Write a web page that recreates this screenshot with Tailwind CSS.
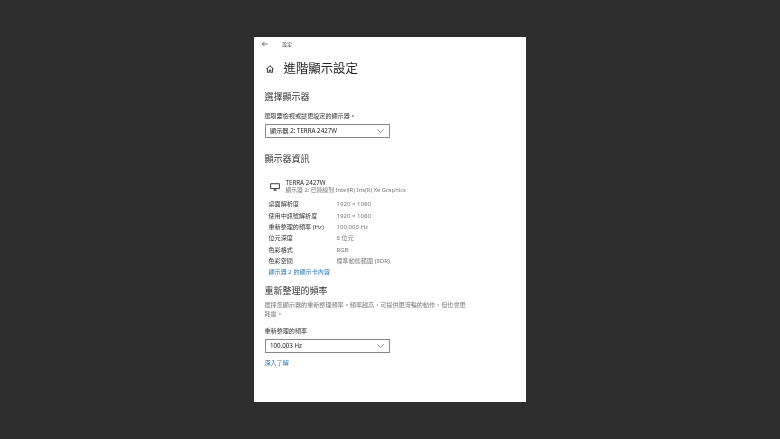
<!DOCTYPE html>
<html lang="zh-Hant">
<head>
    <meta charset="UTF-8">
    <title>進階顯示設定</title>
    <script src="https://cdn.jsdelivr.net/npm/@tailwindcss/browser@4"></script>
</head>
<body class="bg-[#2e2e2e] h-[439px] w-[780px] overflow-hidden font-['Noto_Sans','Noto_Sans_CJK_TC',sans-serif]">
    <div class="pt-[37px] pl-[254px]">
        <div class="bg-white w-[272px] h-[365px] overflow-hidden text-[#1a1a1a]">
            <!-- title bar -->
            <div class="flex items-center h-[14px] pl-[8px] blur-[0.3px]">
                <svg class="w-[6px] h-[6px]" viewBox="0 0 8 8" fill="none" stroke="#333" stroke-width="0.9"><path d="M0.5 4H7.5M3.5 1L0.5 4L3.5 7"/></svg>
                <span class="ml-[14px] text-[5px] leading-none text-[#444]">設定</span>
            </div>

            <div class="pl-[10.5px] blur-[0.3px]">
                <div class="flex items-center h-[20px] mt-[8px]">
                    <svg class="w-[8px] h-[8px] ml-[1px]" viewBox="0 0 10 10" fill="none" stroke="#222" stroke-width="1.1"><path d="M0.6 5L5 0.9L9.4 5M1.8 4V9.2H4.1V6.3H5.9V9.2H8.2V4"/></svg>
                    <h1 class="ml-[10px] text-[12.4px] leading-none text-[#222] font-normal">進階顯示設定</h1>
                </div>

                <h2 class="mt-[12px] text-[9px] leading-[12px] text-[#333] font-normal">選擇顯示器</h2>
                <p class="mt-[7.5px] text-[6.1px] leading-[9px] text-[#333]">選取要檢視或變更設定的顯示器。</p>
                <div class="mt-[4.5px] ml-[0.5px] w-[125px] h-[14px] border-[1.5px] border-[#8a8a8a] flex items-center justify-between pl-[4px] pr-[5px]">
                    <span class="text-[6.2px] leading-none text-[#222]">顯示器 2: TERRA 2427W</span>
                    <svg class="w-[7px] h-[4px]" viewBox="0 0 7 4" fill="none" stroke="#666" stroke-width="0.7"><path d="M0.5 0.5L3.5 3.5L6.5 0.5"/></svg>
                </div>

                <h2 class="mt-[14.5px] text-[9px] leading-[12px] text-[#333] font-normal">顯示器資訊</h2>

                <div class="flex items-center mt-[14.5px] pl-[5px]">
                    <svg class="w-[10px] h-[8px]" viewBox="0 0 12 10" fill="none" stroke="#222" stroke-width="1.1"><path d="M0.5 0.9H11.5V7H0.5ZM4 9H8M6 7V9"/></svg>
                    <div class="ml-[6px]">
                        <div class="text-[6.2px] leading-[7px] text-[#222]">TERRA 2427W</div>
                        <div class="text-[5.8px] leading-[8px] text-[#777]">顯示器 2: 已連線到 Intel(R) Iris(R) Xe Graphics</div>
                    </div>
                </div>

                <dl class="mt-[4.5px] pl-[4px] grid grid-cols-[68px_1fr] auto-rows-[11.4px] items-center text-[6.1px] leading-none">
                    <dt class="text-[#333]">桌面解析度</dt><dd class="text-[#777]">1920 × 1080</dd>
                    <dt class="text-[#333]">使用中訊號解析度</dt><dd class="text-[#777]">1920 × 1080</dd>
                    <dt class="text-[#333]">重新整理的頻率 (Hz)</dt><dd class="text-[#777]">100.003 Hz</dd>
                    <dt class="text-[#333]">位元深度</dt><dd class="text-[#777]">8 位元</dd>
                    <dt class="text-[#333]">色彩格式</dt><dd class="text-[#777]">RGB</dd>
                    <dt class="text-[#333]">色彩空間</dt><dd class="text-[#777]">標準動態範圍 (SDR)</dd>
                </dl>
                <a class="block pl-[4px] text-[6.1px] leading-[9px] text-[#2a78b8]">顯示器 2 的顯示卡內容</a>

                <h2 class="mt-[9.5px] text-[9px] leading-[12px] text-[#333] font-normal">重新整理的頻率</h2>
                <p class="mt-[2.5px] w-[203px] text-[6.1px] leading-[9px] text-[#777]">選擇您顯示器的重新整理頻率。頻率越高，可提供更流暢的動作，但也會更耗電。</p>
                <p class="mt-[8px] text-[6.1px] leading-[9px] text-[#333]">重新整理的頻率</p>
                <div class="mt-[4px] ml-[0.5px] w-[125px] h-[14px] border-[1.5px] border-[#8a8a8a] flex items-center justify-between pl-[4px] pr-[5px]">
                    <span class="text-[6.2px] leading-none text-[#222]">100.003 Hz</span>
                    <svg class="w-[7px] h-[4px]" viewBox="0 0 7 4" fill="none" stroke="#666" stroke-width="0.7"><path d="M0.5 0.5L3.5 3.5L6.5 0.5"/></svg>
                </div>
                <a class="block mt-[5px] text-[6.1px] leading-[9px] text-[#2a78b8]">深入了解</a>
            </div>
        </div>
    </div>
</body>
</html>
